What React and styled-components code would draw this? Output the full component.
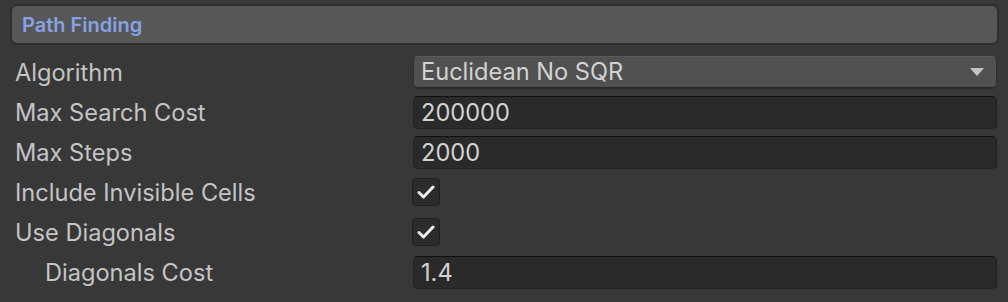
import React from "react";
import styled, { createGlobalStyle } from "styled-components";

const GlobalStyle = createGlobalStyle`
  html, body {
    margin: 0;
    padding: 0;
    background: #383838;
  }
  body {
    font-family: Inter, "Noto Sans", sans-serif;
  }
`;

const Panel = styled.div`
  width: 1008px;
  height: 302px;
  background: #383838;
  padding: 6px 11px 0 12px;
  box-sizing: border-box;
`;

const Header = styled.div`
  height: 37px;
  display: flex;
  align-items: center;
  padding-left: 10px;
  background: #575757;
  border-radius: 5px;
  box-shadow: 0 0 0 2px #2f2f2f;
  color: #86a2e2;
  font-weight: 600;
  font-size: 20px;
`;

const Rows = styled.div`
  margin-top: 9px;
  margin-left: 3px;
  display: flex;
  flex-direction: column;
`;

const Row = styled.div`
  height: 40px;
  display: grid;
  grid-template-columns: 398px 1fr;
  align-items: center;
`;

const Label = styled.div`
  padding-left: ${(p) => (p.$indent ? 30 : 0)}px;
  color: #c4c4c4;
  font-size: 23.6px;
`;

const Field = styled.div`
  height: 33px;
  box-sizing: border-box;
  display: flex;
  align-items: center;
  padding: 0 7px;
  background: #2a2a2a;
  border: 1px solid #212121;
  border-top-color: #0f0f0f;
  border-radius: 5px;
  color: #d2d2d2;
  font-size: 23.6px;
`;

const Dropdown = styled(Field)`
  justify-content: space-between;
  padding: 0 12px 0 7px;
  background: #515151;
  border-color: #303030;
  border-top-color: #5a5a5a;
  border-bottom: 2px solid #2a2a2a;
`;

const Arrow = styled.div`
  width: 0;
  height: 0;
  border-left: 7px solid transparent;
  border-right: 7px solid transparent;
  border-top: 8px solid #c4c4c4;
`;

const Check = styled.div`
  width: 28px;
  height: 28px;
  margin-left: -1px;
  box-sizing: border-box;
  display: flex;
  align-items: center;
  justify-content: center;
  background: #2b2b2b;
  border: 1px solid #1f1f1f;
  border-radius: 4px;
`;

function CheckMark() {
  return (
    <svg width="18" height="14" viewBox="0 0 18 14">
      <path
        d="M2 7.5 L6.5 12 L16 2"
        fill="none"
        stroke="#eeeeee"
        strokeWidth="3"
        strokeLinecap="round"
        strokeLinejoin="round"
      />
    </svg>
  );
}

export default function App() {
  return (
    <Panel>
      <GlobalStyle />
      <Header>Path Finding</Header>
      <Rows>
        <Row>
          <Label>Algorithm</Label>
          <Dropdown>
            <span>Euclidean No SQR</span>
            <Arrow />
          </Dropdown>
        </Row>
        <Row>
          <Label>Max Search Cost</Label>
          <Field>200000</Field>
        </Row>
        <Row>
          <Label>Max Steps</Label>
          <Field>2000</Field>
        </Row>
        <Row>
          <Label>Include Invisible Cells</Label>
          <Check>
            <CheckMark />
          </Check>
        </Row>
        <Row>
          <Label>Use Diagonals</Label>
          <Check>
            <CheckMark />
          </Check>
        </Row>
        <Row>
          <Label $indent>Diagonals Cost</Label>
          <Field>1.4</Field>
        </Row>
      </Rows>
    </Panel>
  );
}
